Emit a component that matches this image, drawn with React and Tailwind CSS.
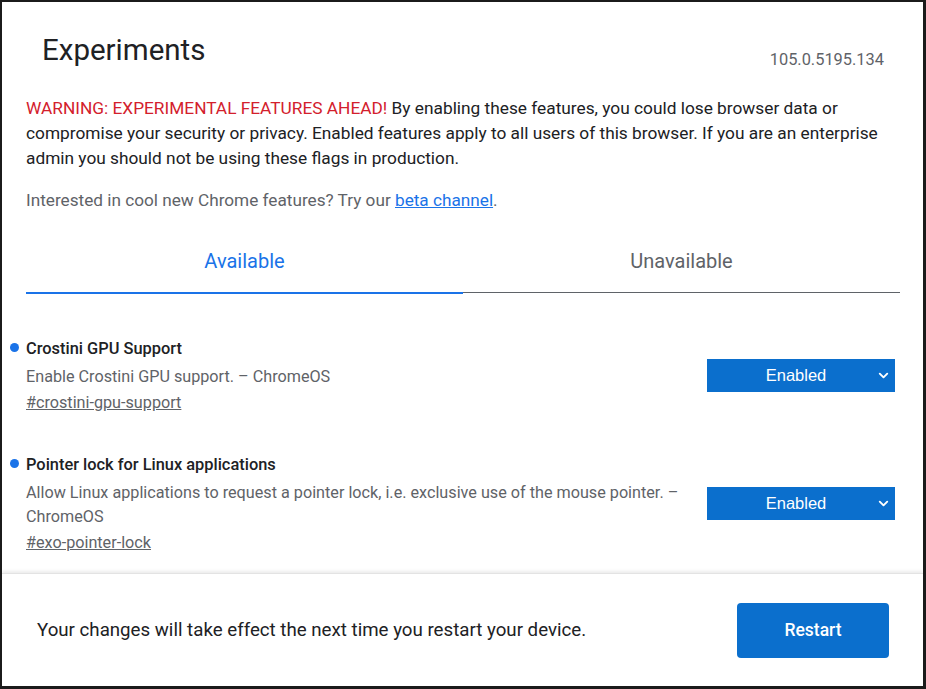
import { ChevronDown } from "lucide-react";

const features = [
  {
    name: "Crostini GPU Support",
    desc: "Enable Crostini GPU support. – ChromeOS",
    tag: "#crostini-gpu-support",
  },
  {
    name: "Pointer lock for Linux applications",
    desc: "Allow Linux applications to request a pointer lock, i.e. exclusive use of the mouse pointer. – ChromeOS",
    tag: "#exo-pointer-lock",
  },
];

function FeatureRow({ feature, first }) {
  return (
    <div className={`flex items-center justify-between ${first ? "mt-[45px]" : "mt-[40px]"}`}>
      <div className="w-[668px]">
        <div className="relative text-[16.4px] leading-[20px] font-medium text-[#202124]">
          <span className="absolute left-[-16px] top-[4px] w-[9px] h-[9px] rounded-full bg-[#1a73e8]" />
          {feature.name}
        </div>
        <p className="mt-[6px] text-[16.2px] leading-[24px] text-[#5f6368]">{feature.desc}</p>
        <a className="mt-[2px] block text-[16.2px] leading-[24px] text-[#5f6368] underline">
          {feature.tag}
        </a>
      </div>
      <div className="relative mb-[4px] mr-[5px] flex h-[33px] w-[188px] items-center justify-center bg-[#0b6fcd] pr-[10px] font-['Liberation_Sans',Arial,sans-serif] text-[16.5px] text-white">
        Enabled
        <ChevronDown className="absolute right-[4px] top-[9px] h-[15px] w-[15px]" strokeWidth={3} />
      </div>
    </div>
  );
}

export default function App() {
  return (
    <div className="flex h-[689px] w-[926px] flex-col overflow-hidden border-b-[3px] border-l-2 border-r-[3px] border-t-2 border-[#1b1b1b] bg-white font-['Roboto',sans-serif]">
      {/* Scrolling content */}
      <div className="flex-1 overflow-hidden pl-6 pr-[23px]">
        <div className="flex items-start justify-between pt-[31px]">
          <h1 className="pl-4 text-[29.5px] leading-[34px] text-[#202124]">Experiments</h1>
          <span className="mt-[17px] pr-4 text-[16.4px] leading-[20px] text-[#5f6368]">105.0.5195.134</span>
        </div>

        <p className="mt-[26px] text-[17.3px] leading-[25px] text-[#202124]">
          <span className="text-[#d3202c]">WARNING: EXPERIMENTAL FEATURES AHEAD!</span> By enabling
          these features, you could lose browser data or compromise your security or privacy.
          Enabled features apply to all users of this browser. If you are an enterprise admin you
          should not be using these flags in production.
        </p>
        <p className="mt-[17px] text-[17.2px] leading-[25px] text-[#5f6368]">
          Interested in cool new Chrome features? Try our{" "}
          <a className="text-[#1a73e8] underline">beta channel</a>.
        </p>

        {/* Tabs */}
        <div className="mt-[17px] flex items-end">
          <div className="flex h-[64px] flex-1 items-center justify-center border-b-2 border-[#1a73e8] text-[20px] text-[#1a73e8]">
            Available
          </div>
          <div className="mb-px flex h-[63px] flex-1 items-center justify-center border-b border-[#5f6368] text-[20px] text-[#5f6368]">
            Unavailable
          </div>
        </div>

        {features.map((f, i) => (
          <FeatureRow key={f.tag} feature={f} first={i === 0} />
        ))}
      </div>

      {/* Footer */}
      <div className="flex h-[113px] shrink-0 items-center justify-between border-t border-[#e3e3e3] pl-[35px] pr-[34px] shadow-[0_-2px_3px_rgba(0,0,0,0.08)]">
        <p className="text-[18.7px] text-[#202124]">
          Your changes will take effect the next time you restart your device.
        </p>
        <button className="h-[55px] w-[152px] rounded-[4px] bg-[#0b6fcd] text-[17.5px] font-medium text-white">
          Restart
        </button>
      </div>
    </div>
  );
}
